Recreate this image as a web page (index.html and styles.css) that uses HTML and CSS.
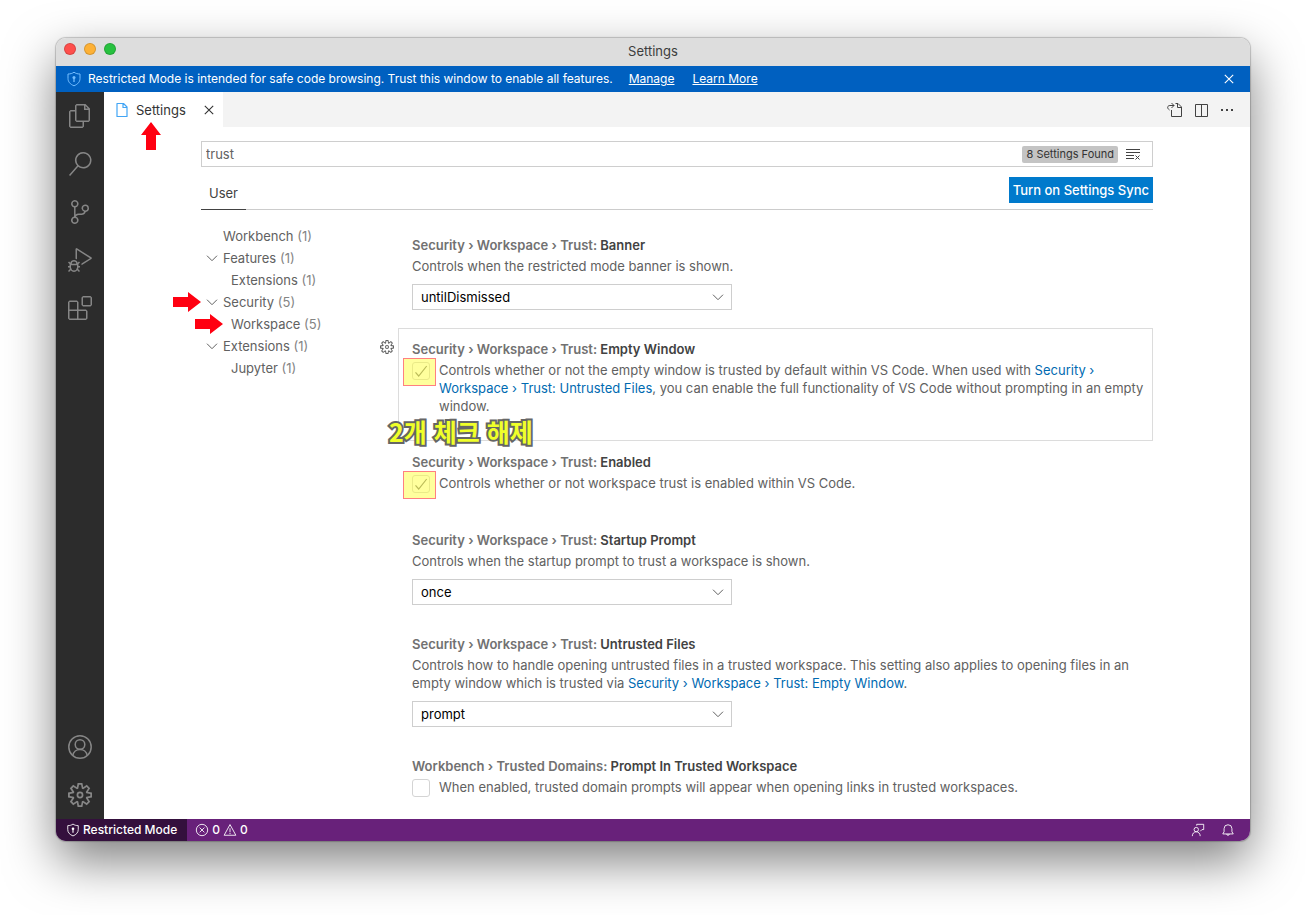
FILE: index.html
```html
<!DOCTYPE html>
<html lang="en">
	<head>
		<meta charset="utf-8">
		<title>Settings</title>
		<link rel="stylesheet" href="styles.css">
	</head>
	<body>
		<svg class="defs" aria-hidden="true">
			<symbol id="shield" viewBox="0 0 16 16"><path d="M8 1.200C6.300 2.500 4.300 3 2 3v4.500c0 3.300 2.200 5.800 6 7.300 3.800-1.500 6-4 6-7.300V3c-2.300 0-4.300-.5-6-1.800z" fill="none" stroke="currentColor"/><circle cx="8" cy="6.500" r="1.500" fill="currentColor"/><path d="M8 7v4" stroke="currentColor" stroke-width="1.300"/></symbol>
			<symbol id="close" viewBox="0 0 16 16"><path d="M3.800 3.800l8.400 8.400M12.200 3.800l-8.400 8.400" fill="none" stroke="currentColor" stroke-width="1.100"/></symbol>
			<symbol id="down" viewBox="0 0 16 16"><path d="M3 5.700l5 5 5-5" fill="none" stroke="currentColor"/></symbol>
			<symbol id="tick" viewBox="0 0 18 18"><path d="M3.500 10.300l3.200 3.700 8-10" fill="none" stroke="currentColor" stroke-width="1.200"/></symbol>
			<symbol id="arrow" viewBox="0 0 28 20"><path d="M0 5h15V0l13 10-13 10v-5H0z" fill="#ff0011"/></symbol>
			<symbol id="gear" viewBox="0 0 24 24"><path fill="currentColor" fill-rule="evenodd" d="M19.850 8.750l4.150.83v4.840l-4.150.83 2.350 3.520-3.430 3.430-3.520-2.350-.83 4.150H9.580l-.83-4.150-3.520 2.350-3.430-3.430 2.350-3.520L0 14.420V9.580l4.150-.83L1.800 5.230 5.230 1.800l3.520 2.350L9.580 0h4.840l.83 4.150 3.520-2.350 3.430 3.430-2.350 3.520zm-1.570 5.070l4-.81v-2l-4-.81-.54-1.300 2.290-3.430-1.430-1.430-3.430 2.290-1.300-.54-.81-4h-2l-.81 4-1.300.54-3.430-2.290-1.430 1.430L6.380 8.900l-.54 1.300-4 .81v2l4 .81.54 1.300-2.290 3.430 1.430 1.430 3.430-2.290 1.300.54.81 4h2l.81-4 1.300-.54 3.430 2.290 1.430-1.430-2.290-3.430.54-1.300zM12 8.570a3.430 3.430 0 1 1 0 6.860 3.430 3.430 0 0 1 0-6.860zm0 1.720a1.710 1.710 0 1 0 0 3.420 1.710 1.710 0 0 0 0-3.420z"/></symbol>
			<symbol id="file" viewBox="0 0 16 16"><path d="M3 1.500h6.500l3.500 3.500v9.500H3zM9 1.500V5.500h4" fill="none" stroke="currentColor" stroke-width="1.200" stroke-linejoin="round"/></symbol>
		</svg>

		<div class="window">
			<header class="titlebar">
				<span class="light red"></span>
				<span class="light yellow"></span>
				<span class="light green"></span>
				<span class="title">Settings</span>
			</header>

			<div class="banner">
				<svg class="icon"><use href="#shield"/></svg>
				<span>Restricted Mode is intended for safe code browsing. Trust this window to enable all features.</span>
				<a href="#">Manage</a>
				<a href="#">Learn More</a>
				<button class="plain banner-close" aria-label="Close banner"><svg class="icon"><use href="#close"/></svg></button>
			</div>

			<div class="main">
				<nav class="activity">
					<button class="plain" aria-label="Explorer"><svg viewBox="0 0 24 24"><path d="M17.500 0h-9L7 1.500V6H2.500L1 7.500v15.070L2.500 24h12.070L16 22.570V18h4.700l1.300-1.430V4.500L17.500 0zm0 2.120l2.380 2.380H17.500V2.120zm-3 20.380h-12v-15H7v9.070L8.500 18h6v4.500zm6-6h-12v-15H16V6h4.500v10.500z"/></svg></button>
					<button class="plain" aria-label="Search"><svg viewBox="0 0 24 24"><path d="M15.250 0a8.250 8.250 0 0 0-6.180 13.720L1 22.880l1.120 1 8.050-9.120A8.251 8.251 0 1 0 15.250.01V0zm0 15a6.750 6.750 0 1 1 0-13.500 6.750 6.750 0 0 1 0 13.500z"/></svg></button>
					<button class="plain" aria-label="Source Control"><svg viewBox="0 0 24 24"><path d="M21.007 8.222A3.738 3.738 0 0 0 15.045 5.200a3.737 3.737 0 0 0 1.156 6.583 2.988 2.988 0 0 1-2.668 1.670h-2.990a4.456 4.456 0 0 0-2.989 1.165V7.400a3.737 3.737 0 1 0-1.494 0v9.117a3.776 3.776 0 1 0 1.816.099 2.990 2.990 0 0 1 2.668-1.667h2.990a4.484 4.484 0 0 0 4.223-3.039 3.736 3.736 0 0 0 3.250-3.687zM4.565 3.738a2.242 2.242 0 1 1 4.484 0 2.242 2.242 0 0 1-4.484 0zm4.484 16.441a2.242 2.242 0 1 1-4.484 0 2.242 2.242 0 0 1 4.484 0zm8.221-9.715a2.242 2.242 0 1 1 0-4.485 2.242 2.242 0 0 1 0 4.485z"/></svg></button>
					<button class="plain" aria-label="Run and Debug"><svg viewBox="0 0 24 24"><path d="M10.940 13.500l-1.320 1.320a3.730 3.730 0 0 0-7.240 0L1.060 13.500 0 14.560l1.720 1.720-.22.22V18H0v1.500h1.500v.08c.077.489.214.966.41 1.420L0 22.940 1.060 24l1.650-1.650A4.308 4.308 0 0 0 6 24a4.310 4.310 0 0 0 3.290-1.650L10.940 24 12 22.940 10.090 21c.198-.464.336-.951.41-1.450v-.1H12V18h-1.500v-1.500l-.22-.22L12 14.560l-1.060-1.060zM6 13.500a2.250 2.250 0 0 1 2.250 2.250h-4.500A2.250 2.250 0 0 1 6 13.500zm3 6a3.330 3.330 0 0 1-3 3 3.330 3.330 0 0 1-3-3v-2.250h6v2.250zm14.760-9.900v1.260L13.500 17.370V15.600l8.500-5.370L9 2v9.460a5.070 5.070 0 0 0-1.500-.72V.63L8.640 0l15.120 9.600z"/></svg></button>
					<button class="plain" aria-label="Extensions"><svg viewBox="0 0 24 24"><path fill-rule="evenodd" d="M13.500 1.500L15 0h7.500L24 1.500V9l-1.500 1.500H15L13.500 9V1.500zm1.500 0V9h7.500V1.500H15zM0 15V6l1.500-1.500H9L10.500 6v7.500H18l1.500 1.500v7.500L18 24H1.500L0 22.500V15zm9-1.500V6H1.500v7.500H9zM9 15H1.500v7.500H9V15zm1.500 7.500H18V15h-7.500v7.500z"/></svg></button>
					<button class="plain account" aria-label="Accounts"><svg viewBox="0 0 24 24"><g fill="none" stroke="currentColor" stroke-width="1.500"><circle cx="12" cy="12" r="11.200"/><circle cx="12" cy="9.500" r="4.800"/><path d="M4.800 20.500a7.300 7.300 0 0 1 14.400 0"/></g></svg></button>
					<button class="plain" aria-label="Manage"><svg><use href="#gear"/></svg></button>
				</nav>

				<div class="editor">
					<div class="tabs">
						<div class="tab">
							<svg class="icon file"><use href="#file"/></svg>
							<span>Settings</span>
							<button class="plain" aria-label="Close tab"><svg class="icon"><use href="#close"/></svg></button>
							<svg class="mark-up" viewBox="0 0 20 28"><path d="M10 0l10 13h-5v15H5V13H0z" fill="#ff0011"/></svg>
						</div>
						<div class="actions">
							<button class="plain" aria-label="Open Settings (JSON)"><svg class="icon" viewBox="0 0 16 16"><g fill="none" stroke="currentColor"><path d="M4.500 8v6.500h10V5L11 1.500H8.500M10.500 1.500v4h4"/><path d="M2.500 8C-.5 6 .5 3.500 3 3.500h4M4.500 1l2.500 2.500L4.500 6"/></g></svg></button>
							<button class="plain" aria-label="Split Editor"><svg class="icon" viewBox="0 0 16 16"><path d="M2.500 2.500h12v12h-12zM8.500 2.500v12" fill="none" stroke="currentColor" stroke-linejoin="round"/></svg></button>
							<button class="plain" aria-label="More Actions"><svg class="icon" viewBox="0 0 16 16"><path d="M2 7h2v2H2zM7 7h2v2H7zM12 7h2v2h-2z" fill="currentColor"/></svg></button>
						</div>
					</div>

					<div class="settings">
						<div class="search">
							<input type="text" value="trust" aria-label="Search settings">
							<span class="count">8 Settings Found</span>
							<button class="plain" aria-label="Clear Settings Search Input"><svg class="icon" viewBox="0 0 16 16"><path d="M1 3.500h14M1 6.500h14M1 9.500h8M1 12.500h8M10.500 9.500l4 4M14.500 9.500l-4 4" fill="none" stroke="currentColor"/></svg></button>
						</div>
						<div class="scope">
							<button class="plain user">User</button>
							<button class="plain sync">Turn on Settings Sync</button>
						</div>

						<div class="columns">
							<ul class="toc">
								<li>Workbench <span>(1)</span></li>
								<li><svg class="icon"><use href="#down"/></svg>Features <span>(1)</span></li>
								<li class="sub">Extensions <span>(1)</span></li>
								<li><svg class="mark"><use href="#arrow"/></svg><svg class="icon"><use href="#down"/></svg>Security <span>(5)</span></li>
								<li class="sub"><svg class="mark inner"><use href="#arrow"/></svg>Workspace <span>(5)</span></li>
								<li><svg class="icon"><use href="#down"/></svg>Extensions <span>(1)</span></li>
								<li class="sub">Jupyter <span>(1)</span></li>
							</ul>

							<div class="list">
								<section class="item">
									<h3>Security › Workspace › Trust: <b>Banner</b></h3>
									<label for="banner">Controls when the restricted mode banner is shown.</label>
									<div class="select">
										<select id="banner"><option>untilDismissed</option></select>
										<svg class="icon"><use href="#down"/></svg>
									</div>
								</section>

								<section class="item focused">
									<button class="plain more" aria-label="More Actions"><svg><use href="#gear"/></svg></button>
									<h3>Security › Workspace › Trust: <b>Empty Window</b></h3>
									<div class="check">
										<span class="box">
											<input type="checkbox" id="empty" checked>
											<svg><use href="#tick"/></svg>
											<i class="highlight"></i>
										</span>
										<label for="empty">Controls whether or not the empty window is trusted by default within VS Code. When used with <a href="#">Security › Workspace › Trust: Untrusted Files</a>, you can enable the full functionality of VS Code without prompting in an empty window.</label>
									</div>
									<strong class="note" lang="ko">2개 체크 해제</strong>
								</section>

								<section class="item">
									<h3>Security › Workspace › Trust: <b>Enabled</b></h3>
									<div class="check">
										<span class="box">
											<input type="checkbox" id="enabled" checked>
											<svg><use href="#tick"/></svg>
											<i class="highlight"></i>
										</span>
										<label for="enabled">Controls whether or not workspace trust is enabled within VS Code.</label>
									</div>
								</section>

								<section class="item">
									<h3>Security › Workspace › Trust: <b>Startup Prompt</b></h3>
									<label for="startup">Controls when the startup prompt to trust a workspace is shown.</label>
									<div class="select">
										<select id="startup"><option>once</option></select>
										<svg class="icon"><use href="#down"/></svg>
									</div>
								</section>

								<section class="item">
									<h3>Security › Workspace › Trust: <b>Untrusted Files</b></h3>
									<label for="untrusted">Controls how to handle opening untrusted files in a trusted workspace. This setting also applies to opening files in an empty window which is trusted via <a href="#">Security › Workspace › Trust: Empty Window</a>.</label>
									<div class="select">
										<select id="untrusted"><option>prompt</option></select>
										<svg class="icon"><use href="#down"/></svg>
									</div>
								</section>

								<section class="item">
									<h3>Workbench › Trusted Domains: <b>Prompt In Trusted Workspace</b></h3>
									<div class="check">
										<span class="box"><input type="checkbox" id="domains"></span>
										<label for="domains">When enabled, trusted domain prompts will appear when opening links in trusted workspaces.</label>
									</div>
								</section>
							</div>
						</div>
					</div>
				</div>
			</div>

			<footer class="status">
				<button class="plain restricted"><svg class="small"><use href="#shield"/></svg>Restricted Mode</button>
				<button class="plain problems">
					<svg class="small" viewBox="0 0 16 16"><g fill="none" stroke="currentColor"><circle cx="8" cy="8" r="6.500"/><path d="M5.300 5.300l5.400 5.400M10.700 5.300l-5.400 5.400"/></g></svg>0
					<svg class="small" viewBox="0 0 16 16"><path d="M8 1.800L14.700 14H1.300zM8 6v4.500M8 11.300v1.400" fill="none" stroke="currentColor" stroke-linejoin="round"/></svg>0
				</button>
				<button class="plain feedback" aria-label="Tweet Feedback"><svg class="small" viewBox="0 0 16 16"><g fill="none" stroke="currentColor"><circle cx="6" cy="7.500" r="2.500"/><path d="M1.500 15c0-3 2-5 4.500-5s4.500 2 4.500 5M6.500 3V1.500h8v6h-2L10.500 9.500"/></g></svg></button>
				<button class="plain" aria-label="Notifications"><svg class="small" viewBox="0 0 16 16"><path d="M2 12.500h12l-1.500-2.500V6.500a4.500 4.500 0 0 0-9 0V10zM6.500 12.500a1.500 1.500 0 0 0 3 0" fill="none" stroke="currentColor" stroke-linejoin="round"/></svg></button>
			</footer>
		</div>
	</body>
</html>
```

FILE: styles.css
```css
*{box-sizing: border-box;}
body{margin: 0; height: 100vh; padding: 38px 56px 74px; display: flex; background-color: #fff; color: #616161; font: 13px/18px Inter, "Noto Sans CJK KR", sans-serif; overflow: hidden;}
a{color: #006ab1; text-decoration: none;}
svg{display: block; flex: none;}
input,select{font: inherit;}
.defs{position: absolute; width: 0; height: 0;}
.icon{width: 16px; height: 16px;}
.small{width: 14px; height: 14px;}
.plain{padding: 0; border: 0; background: none; color: inherit; font: inherit; display: flex; align-items: center;}

.window{flex: 1; min-width: 0; display: flex; flex-direction: column; border-radius: 10px; overflow: hidden; box-shadow: 0 0 1px 1px rgba(0,0,0,.2), 0 20px 50px rgba(0,0,0,.5);}

.titlebar{height: 28px; padding: 0 8px 6px; display: flex; align-items: center; gap: 8px; position: relative; background-color: #dddddd; color: #3c3c3c;}
.light{width: 12px; height: 12px; border-radius: 50%; border: 1px solid rgba(0,0,0,.15);}
.red{background-color: #fe4f4c;}
.yellow{background-color: #fdb136;}
.green{background-color: #27c13f;}
.title{position: absolute; left: 0; right: 0; top: 4px; text-align: center;}

.banner{height: 26px; padding: 0 13px 0 10px; display: flex; align-items: center; background-color: #0060c0; color: #fff; font-size: 12px;}
.banner .icon{margin-right: 6px; color: #75beff;}
.banner a{margin-left: 16px; color: #fff; text-decoration: underline;}
.banner a + a{margin-left: 18px;}
.banner-close{margin-left: auto;}
.banner-close .icon{margin: 0; color: #fff;}

.main{flex: 1; min-height: 0; display: flex;}
.activity{width: 48px; flex: none; display: flex; flex-direction: column; background-color: #2c2c2c; color: #868686;}
.activity button{height: 48px; justify-content: center;}
.activity svg{width: 24px; height: 24px; fill: currentColor;}
.activity .account{margin-top: auto;}

.editor{flex: 1; min-width: 0; display: flex; flex-direction: column; background-color: #fff;}
.tabs{height: 35px; flex: none; display: flex; background-color: #f3f3f3;}
.tab{position: relative; display: flex; align-items: center; padding: 0 6px 0 10px; background-color: #fff; color: #333;}
.tab .file{margin-right: 6px; color: #42a5f5;}
.tab button{margin-left: 15px;}
.mark-up{position: absolute; left: 37px; top: 30px; width: 20px; height: 28px; z-index: 1;}
.actions{margin-left: auto; padding-right: 15px; display: flex; gap: 10px; color: #424242;}

.settings{flex: 1; min-height: 0; display: flex; flex-direction: column; padding: 14px 97px 0;}
.search{height: 26px; flex: none; display: flex; align-items: center; border: 1px solid #cecece; padding-right: 11px; color: #424242;}
.search input{flex: 1; min-width: 0; padding: 0 4px; border: 0; outline: 0; background: none; color: #616161;}
.count{padding: 0 4px; margin-right: 7px; border-radius: 2px; background-color: #c4c4c4; color: #333; font-size: 11px; line-height: 17px;}
.scope{height: 43px; flex: none; display: flex; justify-content: space-between; align-items: flex-end; border-bottom: 1px solid #cccccc;}
.user{height: 33px; padding: 0 8px; margin-bottom: -1px; border-bottom: 1px solid #424242; color: #424242;}
.sync{height: 26px; padding: 0 4px; margin-bottom: 6px; background-color: #007acc; color: #fff; font-weight: 500;}

.columns{flex: 1; min-height: 0; display: flex; padding-top: 14px;}
.toc{width: 197px; flex: none; margin: 0; padding: 1px 0 0; list-style: none; line-height: 22px;}
.toc li{position: relative; padding-left: 22px;}
.toc .sub{padding-left: 30px;}
.toc span{color: #848484;}
.toc .icon{position: absolute; left: 3px; top: 3px;}
.toc .mark{position: absolute; left: -28px; top: 1px; width: 28px; height: 20px;}
.toc .inner{left: -6px;}

.list{flex: 1; min-width: 0;}
.item{position: relative; padding: 12px 8px 18px 14px;}
.item:has(.check){padding-bottom: 26px;}
.focused{box-shadow: inset 0 0 0 1px #dcdcdc;}
.item h3{margin: 0 0 3px; font-size: 13px; font-weight: 600; color: #717171;}
.item h3 b{font-weight: 600; color: #424242;}
.item label{display: block;}
.select{position: relative; width: 320px; margin-top: 9px;}
.select select{display: block; width: 100%; height: 26px; padding: 0 8px; appearance: none; border: 1px solid #cecece; border-radius: 0; background-color: #fff; color: #000;}
.select .icon{position: absolute; right: 6px; top: 5px; pointer-events: none;}
.check{display: flex; gap: 9px; min-height: 19px;}
.box{position: relative; width: 18px; height: 18px; flex: none; margin-top: 1px;}
.box input{display: block; width: 18px; height: 18px; margin: 0; appearance: none; border: 1px solid #d4d4d4; border-radius: 3px;}
.box svg{position: absolute; left: 0; top: 0; width: 18px; height: 18px; color: #777; pointer-events: none;}
.highlight{position: absolute; left: -9px; top: -4px; width: 33px; height: 28px; border: 1px solid #ff8080; background-color: rgba(255,255,60,.5); background-clip: padding-box; pointer-events: none;}
.more{position: absolute; left: -18px; top: 12px;}
.more svg{width: 14px; height: 14px;}
.note{position: absolute; left: -9px; top: 87px; z-index: 1; color: #f0ff29; font: 700 25px/32px "Noto Sans CJK KR", sans-serif; -webkit-text-stroke: 4px #666; paint-order: stroke fill; white-space: nowrap;}

.status{height: 22px; flex: none; display: flex; background-color: #68217a; color: #fff; font-size: 12px; font-weight: 500; padding-right: 15px;}
.restricted{gap: 3px; padding: 0 10px; background-color: #34103d;}
.problems{gap: 3px; padding-left: 8px;}
.feedback{margin-left: auto; margin-right: 16px;}
```
